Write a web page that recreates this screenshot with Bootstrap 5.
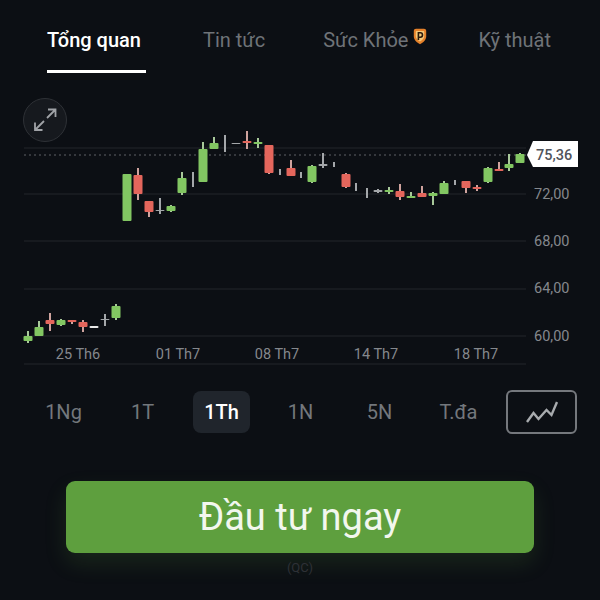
<!DOCTYPE html>
<html lang="vi">
<head>
    <meta charset="UTF-8">
    <meta name="viewport" content="width=device-width, initial-scale=1.0">
    <title>Tổng quan</title>
    <link href="https://cdn.jsdelivr.net/npm/bootstrap@5.3.0/dist/css/bootstrap.min.css" rel="stylesheet">
    <style>
        body {
            background: #0c0f14;
            font-family: Roboto, "Liberation Sans", sans-serif;
            width: 600px;
            height: 600px;
            overflow: hidden;
        }
        .tab-bar {
            height: 73px;
            padding-left: 47px;
        }
        .tab-item {
            color: #6f7378;
            font-size: 20px;
            line-height: 24px;
            padding: 28px 0 0;
            white-space: nowrap;
        }
        .tab-item:hover { color: #6f7378; }
        .tab-item.active {
            color: #fff;
            font-weight: 500;
            width: 99px;
            border-bottom: 3px solid #fff;
        }
        .tab-news { margin-left: 57px; }
        .tab-health { margin-left: 58px; }
        .tab-tech { margin-left: 51px; }
        .premium-icon { margin: -10px 0 0 5px; vertical-align: middle; }
        .chart-area {
            height: 290px;
            margin-top: 17px;
        }
        .chart-area svg { display: block; }
        .expand-btn {
            position: absolute;
            left: 23px;
            top: 8px;
            width: 44px;
            height: 44px;
            padding: 0;
            border-radius: 50%;
            background: #16191e;
            border: 1px solid #2e3136;
        }
        .axis-label {
            font-family: Roboto, "Liberation Sans", sans-serif;
            font-size: 14.5px;
            fill: #85888d;
        }
        .price-label {
            font-family: Roboto, "Liberation Sans", sans-serif;
            font-size: 14.5px;
            font-weight: 500;
            fill: #50535a;
        }
        .period-row {
            margin-top: 10px;
            height: 44px;
            padding-left: 24px;
        }
        .period-btn {
            width: 79px;
            padding: 0;
            border: 0;
            color: #73777c;
            font-size: 20px;
            line-height: 24px;
        }
        .period-btn span {
            display: inline-block;
            padding: 9px 11.5px;
            border-radius: 8px;
        }
        .period-btn.active span {
            background: #20252c;
            color: #fff;
            font-weight: 500;
        }
        .line-toggle {
            width: 71px;
            height: 44px;
            margin-left: 8px;
            padding: 0;
            border: 2px solid #75787d;
            border-radius: 6px;
        }
        .invest-btn {
            display: block;
            width: 468px;
            height: 72px;
            margin: 47px 0 0 66px;
            padding: 0;
            background: #5e9f3e;
            border: 0;
            border-radius: 9px;
            color: #f2f7ee;
            font-size: 38px;
            line-height: 72px;
            box-shadow: 0 10px 22px rgba(94, 159, 62, .16);
        }
        .ad-note {
            margin-top: 8px;
            font-size: 13px;
            line-height: 14px;
            color: #2e3136;
        }
    </style>
</head>
<body>
    <nav class="nav tab-bar flex-nowrap">
        <a class="nav-link tab-item active" href="#">Tổng quan</a>
        <a class="nav-link tab-item tab-news" href="#">Tin tức</a>
        <a class="nav-link tab-item tab-health" href="#">Sức Khỏe<svg class="premium-icon" width="14" height="17" viewBox="0 0 14 17"><path d="M3 .8h8C12.300.8 13.200 1.700 13.200 3v5.500c0 3.300-3 6-6.200 7.700C3.800 14.500.8 11.800.8 8.500V3C.8 1.700 1.700.8 3 .8z" fill="#e5812a"/><path d="M3.800 3h6.400c.7 0 1 .3 1 1v4.300c0 2.200-2.200 4-4.200 5.300-2-1.300-4.200-3.100-4.200-5.300V4c0-.7.300-1 1-1z" fill="#f6c878"/><path d="M5.400 12V4.800h1.900a2.200 2.200 0 0 1 0 4.400H5.400" fill="none" stroke="#2a1a0c" stroke-width="1.600"/></svg></a>
        <a class="nav-link tab-item tab-tech" href="#">Kỹ thuật</a>
    </nav>

    <div class="chart-area position-relative">
        <svg id="chart" width="600" height="290" viewBox="0 90 600 290"></svg>
        <button class="expand-btn d-flex align-items-center justify-content-center" type="button">
            <svg width="24" height="24" viewBox="0 0 24 24" fill="none" stroke="#a0a3a7" stroke-width="1.800"><path d="M15 1.500h7.500V9M22.500 1.500 14 10M2 14.500V22h7.500M2 22l9-9"/></svg>
        </button>
    </div>

    <div class="period-row d-flex align-items-center">
        <button class="btn period-btn" type="button"><span>1Ng</span></button>
        <button class="btn period-btn" type="button"><span>1T</span></button>
        <button class="btn period-btn active" type="button"><span>1Th</span></button>
        <button class="btn period-btn" type="button"><span>1N</span></button>
        <button class="btn period-btn" type="button"><span>5N</span></button>
        <button class="btn period-btn" type="button"><span>T.đa</span></button>
        <button class="btn line-toggle d-flex align-items-center justify-content-center" type="button">
            <svg width="32" height="22" viewBox="0 0 32 22" fill="none" stroke="#a8abae" stroke-width="2.400"><path d="M1 21 7.500 12l5 6 8-9 5 5L31 1"/></svg>
        </button>
    </div>

    <button class="btn invest-btn" type="button">Đầu tư ngay</button>
    <div class="ad-note text-center">(QC)</div>

    <script>
        const GREEN = '#82c662', RED = '#e4665c', GRAY = '#a4a7aa';
        const WICK = { [GREEN]: '#a8c99a', [RED]: '#cfa39e' };
        // x, wick top, wick bottom, body top, body bottom, colour
        const candles = [
            [28, 331, 343, 336, 341, GREEN], [39, 321, 336, 327, 336, GREEN], [50, 313, 331, 320, 324, RED],
            [61, 319, 326, 320, 325, GREEN], [72, 320, 324, 320, 322, RED], [83, 320, 332, 322, 327, RED],
            [94, 326, 328, 326, 328, '#e8e8e8'], [105, 314, 326, 319, 320, GRAY], [116, 304, 320, 306, 318, GREEN],
            [127, 174, 221, 174, 221, GREEN], [138, 168, 200, 175, 194, RED], [149, 201, 217, 201, 212, RED],
            [160, 198, 214, 210, 211, GRAY], [171, 205, 212, 206, 211, GREEN], [182, 172, 195, 178, 193, GREEN],
            [193, 172, 187, 179, 179, GRAY], [203, 142, 182, 149, 182, GREEN], [214, 137, 149, 143, 149, GREEN],
            [225, 135, 152, 143, 143, GRAY], [236, 143, 144, 143, 144, GRAY], [247, 131, 149, 141, 143, RED],
            [258, 138, 148, 142, 144, GREEN], [269, 145, 174, 145, 173, RED], [280, 169, 175, 171, 171, GRAY],
            [291, 160, 176, 168, 176, RED], [301, 172, 178, 174, 174, GRAY], [312, 165, 183, 166, 182, GREEN],
            [323, 153, 168, 164, 166, GRAY], [334, 162, 167, 164, 164, GRAY], [346, 173, 188, 174, 187, RED],
            [356, 183, 191, 186, 186, GRAY], [367, 188, 198, 192, 192, '#dcdcdc'], [378, 189, 193, 190, 192, GRAY],
            [389, 187, 194, 190, 192, GREEN], [400, 184, 200, 191, 197, RED], [411, 192, 198, 196, 198, GREEN],
            [422, 186, 197, 193, 197, RED], [433, 192, 205, 193, 196, GREEN], [444, 181, 194, 183, 194, GREEN],
            [455, 180, 185, 182, 182, GRAY], [466, 181, 193, 181, 188, RED], [477, 185, 191, 187, 189, RED],
            [488, 167, 183, 168, 182, GREEN], [499, 162, 171, 169, 171, RED], [509, 154, 171, 164, 168, GREEN],
            [520, 153, 163, 154, 163, GREEN]
        ];
        const gridY = [148, 194, 241, 289, 336, 364];
        const yLabels = [[72, '72,00', 194], [68, '68,00', 241], [64, '64,00', 288], [60, '60,00', 336]];
        const xLabels = [[78, '25 Th6'], [178, '01 Th7'], [277, '08 Th7'], [376, '14 Th7'], [476, '18 Th7']];

        let out = '';
        gridY.forEach(y => {
            out += `<line x1="24" x2="526" y1="${y}" y2="${y}" stroke="#23262b"/>`;
        });
        out += '<line x1="24" x2="526" y1="155" y2="155" stroke="#5f6267" stroke-dasharray="2 3"/>';
        candles.forEach(c => {
            const [x, wt, wb, bt, bb, col] = c;
            out += `<rect x="${x - 1}" y="${wt}" width="2" height="${wb - wt}" fill="${WICK[col] || GRAY}"/>`;
            if (bb > bt) {
                out += `<rect x="${x - 4.5}" y="${bt}" width="9" height="${bb - bt}" rx="1" fill="${col}"/>`;
            }
        });
        yLabels.forEach(l => {
            out += `<text class="axis-label" x="534" y="${l[2] + 5}">${l[1]}</text>`;
        });
        xLabels.forEach(l => {
            out += `<text class="axis-label" x="${l[0]}" y="359" text-anchor="middle">${l[1]}</text>`;
        });
        out += '<path d="M527 155 533 141H578V167H533Z" fill="#fff"/>';
        out += '<text class="price-label" x="536" y="160">75,36</text>';
        document.getElementById('chart').innerHTML = out;
    </script>
    <script src="https://cdn.jsdelivr.net/npm/bootstrap@5.3.0/dist/js/bootstrap.bundle.min.js"></script>
</body>
</html>
